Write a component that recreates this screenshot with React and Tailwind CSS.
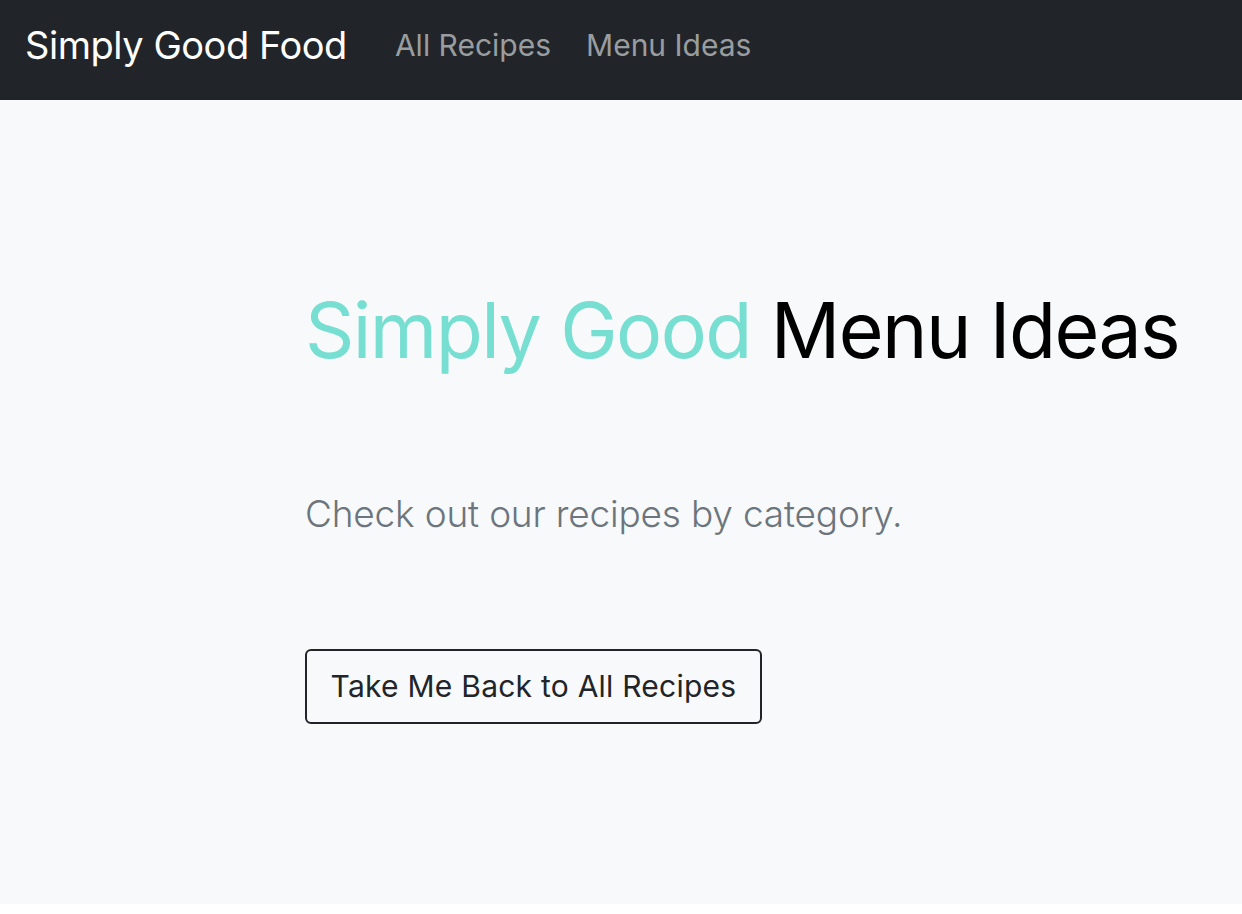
export default function App() {
  return (
    <div className="min-h-[904px] bg-[#f8f9fa] font-['Inter',sans-serif]">
      <nav className="flex h-[100px] items-center bg-[#212529] px-[25px] pb-[10px]">
        <a href="#" className="text-[38px] leading-none tracking-[-0.012em] text-white">Simply Good Food</a>
        <div className="ml-[48px] flex gap-[35px] text-[30px] leading-none text-[#9a9da0]">
          <a href="#">All Recipes</a>
          <a href="#">Menu Ideas</a>
        </div>
      </nav>

      <main className="pl-[305px]">
        <h1 className="mt-[184px] text-[77px] leading-[1.2] tracking-[-0.021em]">
          <span className="text-[#76dfd2]">Simply Good</span>{' '}
          <span className="text-black">Menu Ideas</span>
        </h1>
        <p className="mt-[110px] text-[37px] font-light leading-[1.5] tracking-[-0.005em] text-[#6c757d]">
          Check out our recipes by category.
        </p>
        <button className="mt-[107px] h-[75px] w-[457px] rounded-[6px] border-2 border-[#212529] text-[30px] tracking-[0.008em] text-[#212529]">
          Take Me Back to All Recipes
        </button>
      </main>
    </div>
  );
}
